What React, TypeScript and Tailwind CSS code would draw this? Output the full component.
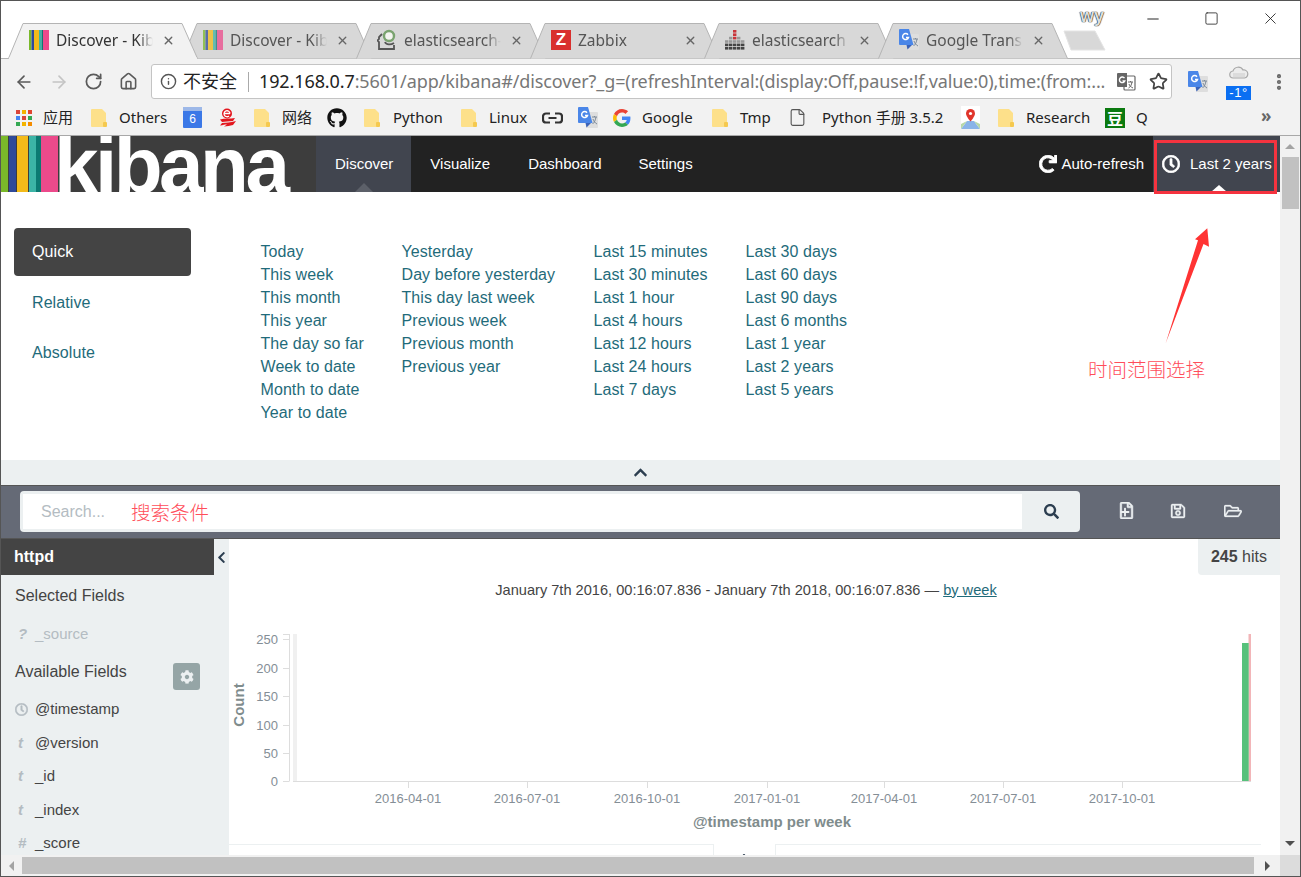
import React from 'react';
import { ArrowLeft, ArrowRight, RotateCw, Home, Info, Star, X, Minus, Square, MoreVertical, File } from 'lucide-react';
import { FaCog, FaChevronLeft, FaChevronUp, FaRedo, FaRegClock, FaRegFolderOpen, FaRegSave, FaRegFile, FaSearch, FaGithub, FaPlus } from 'react-icons/fa';

const SANS = "font-['Liberation_Sans',Arial,sans-serif]";
const CHROME = "font-['Noto_Sans','Noto_Sans_CJK_SC',sans-serif]";

const KibanaIcon = ({ faded = false }: { faded?: boolean }) => (
  <svg width="20" height="20" viewBox="0 0 20 20" className={`shrink-0 ${faded ? 'opacity-75' : ''}`}>
    <rect x="0" width="2.5" height="20" fill="#7ab92a" />
    <rect x="2.5" width="2.5" height="20" fill="#2f4a9a" />
    <rect x="5" width="5" height="20" fill="#f3bb1a" />
    <rect x="10" width="2.5" height="20" fill="#3cb4a6" />
    <rect x="12.5" width="1.5" height="20" fill="#0c7a72" />
    <rect x="14" width="6" height="20" fill="#ec4a8b" />
  </svg>
);

const HeadIcon = () => (
  <svg width="20" height="22" viewBox="0 0 20 22" className="shrink-0">
    <circle cx="12" cy="7" r="5" fill="#f4f4f0" stroke="#7aa36f" strokeWidth="2.4" />
    <path d="M5 5 L2 8 V10 L0.500 11.500 L2 13 V20 H17 V16 M8 13 C9 16 14 16 17 14" fill="none" stroke="#555" strokeWidth="1.800" />
  </svg>
);

const ZabbixIcon = () => (
  <div className={`w-5 h-5 bg-[#d9302e] text-white text-[17px] font-bold flex items-center justify-center shrink-0 ${SANS}`}>Z</div>
);

const BarsIcon = () => (
  <svg width="20" height="20" viewBox="0 0 20 20" className="shrink-0">
    {[0, 1, 2, 3, 4].map((c) =>
      [0, 1, 2, 3, 4, 5].map((r) => {
        if (r < [3, 2, 0, 2, 3][c]) return null;
        const fill = r < 3 && c === 2 ? '#c9343a' : r > 3 ? '#444' : '#999';
        return <rect key={`${c}-${r}`} x={c * 4} y={r * 3.4} width="3.4" height="2.6" fill={fill} />;
      }),
    )}
  </svg>
);

const TranslateIcon = () => (
  <svg width="20" height="22" viewBox="0 0 20 22" className="shrink-0">
    <rect x="8" y="5" width="12" height="16" rx="1" fill="#dedede" />
    <path d="M0 1 a1 1 0 0 1 1 -1 H10 L14.500 16 H1 a1 1 0 0 1 -1 -1 Z" fill="#4a86e8" />
    <path d="M7.500 16 L8.500 20.500 L13 16 Z" fill="#3a62b8" />
    <path d="M9 5.700 A3 3 0 1 0 9.500 8.500 H7" fill="none" stroke="#fff" strokeWidth="1.500" />
    <path d="M14 10 H19 M16.500 9 V10 M14.500 17 C16.500 15.500 17.500 13 18 10 M15 12 C15.500 14 17 16 19 17" fill="none" stroke="#7d8a99" strokeWidth="1" />
  </svg>
);

const FolderIcon = () => (
  <svg width="16" height="18" viewBox="0 0 16 18" className="shrink-0">
    <path d="M0 1 a1 1 0 0 1 1 -1 H11 L15 4 V17 a1 1 0 0 1 -1 1 H1 a1 1 0 0 1 -1 -1 Z" fill="#fde08a" />
    <rect x="12" y="13" width="4" height="5" rx="1" fill="#f5c94f" />
  </svg>
);

const GridIcon = () => (
  <svg width="16" height="16" viewBox="0 0 16 16" className="shrink-0">
    {['#d9453a', '#f4b400', '#e0452f', '#4285f4', '#d9453a', '#34a853', '#34a853', '#f4b400', '#f48c00'].map((c, i) => (
      <rect key={i} x={(i % 3) * 6} y={Math.floor(i / 3) * 6} width="4" height="4" fill={c} />
    ))}
  </svg>
);

const GoogleIcon = () => (
  <svg width="18" height="18" viewBox="0 0 48 48" className="shrink-0">
    <path fill="#EA4335" d="M24 9.5c3.5 0 6.700 1.200 9.200 3.600l6.900-6.900C35.900 2.400 30.500 0 24 0 14.600 0 6.500 5.400 2.600 13.300l8 6.200C12.500 13.700 17.800 9.500 24 9.500z" />
    <path fill="#4285F4" d="M46.500 24.500c0-1.600-.1-3.100-.4-4.500H24v9h12.700c-.6 2.900-2.200 5.400-4.700 7.100l7.700 6c4.500-4.200 6.800-10.300 6.800-17.600z" />
    <path fill="#FBBC05" d="M10.500 28.700c-.5-1.400-.8-3-.8-4.700s.3-3.200.8-4.700l-8-6.200C.9 16.400 0 20.100 0 24s.9 7.600 2.600 10.900l7.900-6.200z" />
    <path fill="#34A853" d="M24 48c6.500 0 11.900-2.100 15.900-5.800l-7.700-6c-2.200 1.400-4.900 2.300-8.100 2.300-6.200 0-11.500-4.200-13.400-9.800l-8 6.200C6.500 42.600 14.600 48 24 48z" />
  </svg>
);

const CalendarIcon = () => (
  <div className="w-[19px] h-[21px] shrink-0 bg-[#3b78e7] flex flex-col rounded-[1px]">
    <div className="h-[4px] bg-[#9db8e8]" />
    <div className={`flex-1 text-white text-[12px] leading-[17px] text-center ${SANS}`}>6</div>
  </div>
);

const NeteaseIcon = () => (
  <svg width="18" height="20" viewBox="0 0 18 20" className="shrink-0">
    <circle cx="8" cy="5.500" r="5" fill="#e3161e" />
    <path d="M5 5.500 H11 M11 5.500 A3 3 0 1 0 10 8" fill="none" stroke="#fff" strokeWidth="1.300" />
    <path d="M1 11.500 C6 10 11 11 16 10 L14 13 C10 13.500 6 13.500 3 14 Z M3 15 C7 14.500 11 14.500 17 13 L14 17 C11 18 8 18 5 18.500 L8 16.500 C6 16.500 4 17 1 17.500 Z" fill="#e3161e" />
  </svg>
);

const LinkIcon = () => (
  <svg width="21" height="12" viewBox="0 0 21 12" className="shrink-0">
    <path d="M8 1.500 H4 a3 3 0 0 0 -3 3 V7.500 a3 3 0 0 0 3 3 H8 M13 1.500 H17 a3 3 0 0 1 3 3 V7.500 a3 3 0 0 1 -3 3 H13 M6.500 6 H14.500" fill="none" stroke="#333" strokeWidth="2.200" />
  </svg>
);

const MapIcon = () => (
  <svg width="19" height="23" viewBox="0 0 19 23" className="shrink-0">
    <rect width="19" height="23" fill="#fff" />
    <path d="M0 23 L6 15 H13 L19 23 Z" fill="#8ab4e8" />
    <path d="M0 23 V18 L6 15 Z M19 23 V18 L13 15 Z" fill="#b7d8a8" />
    <path d="M9.500 3 a4.500 4.500 0 0 1 4.500 4.500 c0 3 -4.500 8 -4.500 8 s-4.500 -5 -4.500 -8 a4.500 4.500 0 0 1 4.500 -4.500 Z" fill="#e0352b" />
    <circle cx="9.500" cy="7.500" r="1.600" fill="#fff" />
  </svg>
);

const DoubanIcon = () => (
  <div className="w-5 h-5 bg-[#0b7a10] shrink-0 flex items-center justify-center text-white text-[16px] font-bold leading-none font-['Noto_Sans_CJK_SC',sans-serif]">豆</div>
);

const tabs = [
  { icon: <KibanaIcon />, title: 'Discover - Kibana', active: true },
  { icon: <KibanaIcon faded />, title: 'Discover - Kibana' },
  { icon: <HeadIcon />, title: 'elasticsearch-head' },
  { icon: <ZabbixIcon />, title: 'Zabbix' },
  { icon: <BarsIcon />, title: 'elasticsearch' },
  { icon: <TranslateIcon />, title: 'Google Translate' },
];

const TabStrip = () => (
  <div className={`h-[58px] bg-white border-b border-[#b4b4b4] flex items-end pl-[7px] relative shrink-0 ${CHROME}`}>
    {tabs.map((t, i) => (
      <div key={i} className={`relative w-[190px] h-[35px] shrink-0 flex items-center pl-[21px] pr-[20px] -mr-[16px] ${t.active ? 'z-10' : ''}`}>
        <svg width="190" height="36" viewBox="0 0 190 36" className="absolute left-0 top-0">
          <path d="M0.500 35.500 L15 0.500 H174 L189.500 35.500" fill={t.active ? '#f2f2f2' : '#d8d8d8'} stroke="#b4b4b4" />
          {t.active && <path d="M1 35.500 H189" stroke="#f2f2f2" strokeWidth="2" />}
        </svg>
        <div className="relative flex items-center w-full -mt-[1px]">
          {t.icon}
          <span className={`ml-[7px] w-[97px] overflow-hidden whitespace-nowrap text-[15.500px] leading-[22px] [mask-image:linear-gradient(to_right,black_85%,transparent)] ${t.active ? 'text-[#333]' : 'text-[#555]'}`}>
            {t.title}
          </span>
          <X size={13} strokeWidth={2.500} className="ml-[9px] text-[#666] shrink-0" />
        </div>
      </div>
    ))}
    <svg width="44" height="22" viewBox="0 0 44 22" className="ml-[11px] mb-[6px] shrink-0">
      <path d="M1 1 H32 L42 20 H8 Z" fill="#d8d8d8" stroke="#e4e4e4" strokeLinejoin="round" />
    </svg>
    <div className={`absolute left-[1079px] top-[2px] text-[18px] font-bold text-[#ddd] [text-shadow:0_0_1px_#000,0_0_1px_#000] ${SANS}`}>wy</div>
    <div className="absolute right-[20px] top-[8px] flex items-center text-[#222]">
      <Minus size={18} strokeWidth={1.300} />
      <Square size={15} strokeWidth={1.300} className="ml-[42px]" />
      <X size={19} strokeWidth={1.100} className="ml-[42px]" />
    </div>
  </div>
);

const ToolBar = () => (
  <div className={`h-[46px] bg-[#f2f2f2] flex items-center pl-[13px] pb-[1px] shrink-0 ${CHROME}`}>
    <ArrowLeft size={20} strokeWidth={2} className="text-[#5a5a5a]" />
    <ArrowRight size={20} strokeWidth={2} className="ml-[15px] text-[#c4c4c4]" />
    <RotateCw size={19} strokeWidth={2.200} className="ml-[15px] text-[#5a5a5a]" />
    <Home size={19} strokeWidth={2} className="ml-[16px] text-[#5a5a5a]" />
    <div className="ml-[13px] w-[1021px] h-[35px] bg-white border border-[#c4c4c4] rounded-[3px] flex items-center pl-[8px]">
      <Info size={17} strokeWidth={2} className="text-[#555] shrink-0" />
      <span className="ml-[6px] text-[18px] text-[#222] whitespace-nowrap">不安全</span>
      <div className="ml-[11px] w-px h-[20px] bg-[#aaa] shrink-0" />
      <div className="ml-[10px] w-[857px] shrink-0 text-[18px] tracking-[-0.110px] whitespace-nowrap overflow-hidden text-[#777]">
        <span className="text-[#222]">192.168.0.7</span>:5601/app/kibana#/discover?_g=(refreshInterval:(display:Off,pause:!f,value:0),time:(from:...
      </div>
      <svg width="20" height="20" viewBox="0 0 20 20" className="shrink-0">
        <rect x="8" y="4" width="11" height="14" rx="1" fill="#fff" stroke="#666" strokeWidth="1.200" />
        <path d="M1 2 a1 1 0 0 1 1 -1 H11 V15 H2 a1 1 0 0 1 -1 -1 Z" fill="#666" />
        <path d="M8.500 6.200 A2.800 2.800 0 1 0 8.800 9 H6.500" fill="none" stroke="#fff" strokeWidth="1.400" />
        <path d="M12 10 H17 M14.500 9 V10 M12.500 16 C14.500 15 15.500 13 16 10 M13 12 C13.500 14 15 15 17 16" fill="none" stroke="#666" strokeWidth="1" />
      </svg>
      <Star size={19} strokeWidth={2.200} className="ml-[13px] text-[#444] shrink-0" />
    </div>
    <div className="ml-[16px]"><TranslateIcon /></div>
    <div className="ml-[18px] w-[25px] h-[34px] relative shrink-0 flex flex-col items-center">
      <svg width="20" height="14" viewBox="0 0 20 14">
        <path d="M4.500 13 a3.500 3.500 0 0 1 -0.500 -7 a5.500 5.500 0 0 1 10 -1 a4 4 0 0 1 1.500 8 Z" fill="#ececec" stroke="#a8a8a8" strokeWidth="1.200" />
        <path d="M4 9 H16 M4 11 H16" stroke="#c4c4c4" strokeWidth="0.800" />
      </svg>
      <div className={`absolute bottom-[-1px] w-[25px] h-[14px] bg-[#0b6ff2] text-white text-[13px] leading-[14px] text-center tracking-[0.500px] ${SANS}`}>-1°</div>
    </div>
    <MoreVertical size={20} strokeWidth={3} className="ml-[18px] text-[#666]" />
  </div>
);

const bookmarks: { w: string; icon: React.ReactNode; label?: string; gap: string }[] = [
  { w: 'w-[75px]', icon: <GridIcon />, label: '应用', gap: 'ml-[11px]' },
  { w: 'w-[92px]', icon: <FolderIcon />, label: 'Others', gap: 'ml-[12px]' },
  { w: 'w-[36px]', icon: <CalendarIcon />, gap: '' },
  { w: 'w-[35px]', icon: <NeteaseIcon />, gap: '' },
  { w: 'w-[73px]', icon: <FolderIcon />, label: '网络', gap: 'ml-[12px]' },
  { w: 'w-[37px]', icon: <FaGithub size={20} className="text-[#111]" />, gap: '' },
  { w: 'w-[97px]', icon: <FolderIcon />, label: 'Python', gap: 'ml-[13px]' },
  { w: 'w-[81px]', icon: <FolderIcon />, label: 'Linux', gap: 'ml-[12px]' },
  { w: 'w-[36px]', icon: <LinkIcon />, gap: '' },
  { w: 'w-[35px]', icon: <TranslateIcon />, gap: '' },
  { w: 'w-[99px]', icon: <GoogleIcon />, label: 'Google', gap: 'ml-[11px]' },
  { w: 'w-[78px]', icon: <FolderIcon />, label: 'Tmp', gap: 'ml-[12px]' },
  { w: 'w-[171px]', icon: <File size={19} strokeWidth={1.400} className="text-[#555] -ml-[2px]" />, label: 'Python 手册 3.5.2', gap: 'ml-[15px]' },
  { w: 'w-[37px]', icon: <MapIcon />, gap: '' },
  { w: 'w-[107px]', icon: <FolderIcon />, label: 'Research', gap: 'ml-[12px]' },
  { w: 'w-[100px]', icon: <DoubanIcon />, label: 'Q', gap: 'ml-[11px]' },
];

const BookmarksBar = () => (
  <div className={`h-[31px] bg-[#f2f2f2] border-b border-[#a8a8a8] flex items-center pl-[15px] pb-[5px] shrink-0 relative text-[15px] text-[#222] ${CHROME}`}>
    {bookmarks.map((b, i) => (
      <div key={i} className={`${b.w} shrink-0 flex items-center whitespace-nowrap`}>
        {b.icon}
        {b.label && <span className={b.gap}>{b.label}</span>}
      </div>
    ))}
    <span className="absolute left-[1260px] -top-[2px] text-[17px] font-bold text-[#666]">»</span>
  </div>
);

const NavBar = () => (
  <div className={`h-[56px] bg-[#222] flex items-stretch text-white text-[15px] shrink-0 ${SANS}`}>
    <div className="w-[315px] bg-[#3d3d3d] flex overflow-hidden shrink-0">
      <div className="w-[7px] bg-[#7ab92a]" />
      <div className="w-[1px] bg-[#3d3d3d]" />
      <div className="w-[7px] bg-[#2f4a9a]" />
      <div className="w-[1px] bg-[#3d3d3d]" />
      <div className="w-[11px] bg-[#f3bb1a]" />
      <div className="w-[1px] bg-[#3d3d3d]" />
      <div className="w-[7px] bg-[#3cb4a6]" />
      <div className="w-[5px] bg-[#0c7a72]" />
      <div className="w-[17px] bg-[#ec4a8b]" />
      <div className="text-[80px] font-bold leading-[56px] tracking-[-3.500px] text-white whitespace-nowrap -ml-[4px] translate-y-[2px]">kibana</div>
    </div>
    <div className="relative pl-[19px] pr-[18px] bg-[#41454f] flex items-center">
      Discover
      <div className="absolute bottom-0 left-1/2 -translate-x-1/2 border-x-[9px] border-x-transparent border-b-[9px] border-b-[#5c6069]" />
    </div>
    <div className="px-[19px] flex items-center">Visualize</div>
    <div className="pl-[19px] pr-[18px] flex items-center">Dashboard</div>
    <div className="px-[19px] flex items-center">Settings</div>
    <div className="flex-1" />
    <div className="flex items-center gap-[4px] pr-[9px]">
      <FaRedo size={18} stroke="currentColor" strokeWidth={24} />
      Auto-refresh
    </div>
    <div className="relative w-[127px] bg-[#41454f] flex items-center pl-[9px]">
      <FaRegClock size={18} stroke="currentColor" strokeWidth={24} />
      <span className="ml-[10px]">Last 2 years</span>
      <div className="absolute bottom-0 left-[58px] border-x-[8px] border-x-transparent border-b-[7px] border-b-white" />
    </div>
  </div>
);

const quickColumns = [
  { w: 'w-[141px]', items: ['Today', 'This week', 'This month', 'This year', 'The day so far', 'Week to date', 'Month to date', 'Year to date'] },
  { w: 'w-[192px]', items: ['Yesterday', 'Day before yesterday', 'This day last week', 'Previous week', 'Previous month', 'Previous year'] },
  { w: 'w-[152px]', items: ['Last 15 minutes', 'Last 30 minutes', 'Last 1 hour', 'Last 4 hours', 'Last 12 hours', 'Last 24 hours', 'Last 7 days'] },
  { w: 'w-[152px]', items: ['Last 30 days', 'Last 60 days', 'Last 90 days', 'Last 6 months', 'Last 1 year', 'Last 2 years', 'Last 5 years'] },
];

const TimePanel = () => (
  <div className={`h-[268px] bg-white flex pl-[13px] pt-[36px] text-[16px] tracking-[0.080px] text-[#1f6b7a] shrink-0 ${SANS}`}>
    <div className="w-[177px] shrink-0">
      <div className="h-[48px] bg-[#444] text-white rounded-[4px] flex items-center pl-[18px]">Quick</div>
      <div className="h-[50px] mt-[2px] flex items-center pl-[18px]">Relative</div>
      <div className="h-[50px] flex items-center pl-[18px]">Absolute</div>
    </div>
    <div className="ml-[70px] -translate-x-[0.5px] flex pt-[12px]">
      {quickColumns.map((c, i) => (
        <div key={i} className={c.w}>
          {c.items.map((item) => (
            <div key={item} className="h-[23px] leading-[23px] whitespace-nowrap">{item}</div>
          ))}
        </div>
      ))}
    </div>
  </div>
);

const SearchBar = () => (
  <div className={`h-[54px] bg-[#656a76] border-t border-[#555] border-b flex items-center pl-[19px] shrink-0 ${SANS}`}>
    <div className="w-[1060px] h-[41px] flex rounded-[4px] overflow-hidden bg-[#ecf0f1] -mt-[1px]">
      <div className="w-[999px] my-[3px] ml-[3px] bg-white flex items-center pl-[18px] text-[16px] text-[#b4bcc2]">
        Search...
        <span className="ml-[26px] text-[19.500px] text-[#ff4d5a] font-['Noto_Sans_CJK_SC',sans-serif] font-light">搜索条件</span>
      </div>
      <div className="flex-1 flex items-center justify-center">
        <FaSearch size={15} className="text-[#2c3e50]" />
      </div>
    </div>
    <div className="relative ml-[38px] -mt-[3px] text-[#ecf0f1]">
      <FaRegFile size={17} stroke="currentColor" strokeWidth={16} />
      <FaPlus size={10} className="absolute left-[2px] top-[5px]" />
    </div>
    <FaRegSave size={16} stroke="currentColor" strokeWidth={12} className="ml-[35px] -mt-[3px] text-[#ecf0f1]" />
    <FaRegFolderOpen size={18} stroke="currentColor" strokeWidth={8} className="ml-[38px] -mt-[3px] text-[#ecf0f1]" />
  </div>
);

const fields = [
  { type: 'clock', name: '@timestamp', h: 'h-[34px]' },
  { type: 't', name: '@version', h: 'h-[34px]' },
  { type: 't', name: '_id', h: 'h-[33px]' },
  { type: 't', name: '_index', h: 'h-[34px]' },
  { type: '#', name: '_score', h: 'h-[33px]' },
];

const Sidebar = () => (
  <div className="w-[228px] bg-[#ecf0f1] shrink-0 flex flex-col overflow-hidden">
    <div className="flex h-[36px] shrink-0">
      <div className="w-[213px] bg-[#444] text-white font-bold text-[16px] flex items-center pl-[13px]">httpd</div>
      <div className="flex-1 bg-[#ecf0f1] flex items-center justify-center">
        <FaChevronLeft size={13} className="text-[#2c3e50]" />
      </div>
    </div>
    <div className="pl-[14px] mt-[11px] h-[20px] leading-[20px] text-[16px] text-[#444] shrink-0">Selected Fields</div>
    <div className="pl-[17px] mt-[18px] h-[20px] flex items-center text-[15px] text-[#b4bcc2] shrink-0">
      <span className="w-[17px] font-bold italic">?</span>
      <span>_source</span>
    </div>
    <div className="pl-[14px] pr-[28px] mt-[13px] h-[34px] flex items-start justify-between text-[16px] text-[#444] shrink-0">
      <span className="mt-[3px]">Available Fields</span>
      <div className="w-[27px] h-[27px] -ml-[1px] mr-[1px] mt-[6px] bg-[#95a5a6] rounded-[3px] flex items-center justify-center">
        <FaCog size={14} className="text-[#ecf0f1]" />
      </div>
    </div>
    <div className="mt-[1px]">
      {fields.map((f) => (
        <div key={f.name} className={`${f.h} pl-[14px] flex items-center text-[15px] text-[#444]`}>
          <span className="w-[20px] text-[#b4bcc2] font-bold italic flex">
            {f.type === 'clock' ? <FaRegClock size={13} stroke="currentColor" strokeWidth={20} /> : <span className="pl-[3px]">{f.type}</span>}
          </span>
          <span>{f.name}</span>
        </div>
      ))}
    </div>
  </div>
);

const yTicks = [
  { y: 639, label: '250' },
  { y: 668, label: '200' },
  { y: 696, label: '150' },
  { y: 725, label: '100' },
  { y: 753, label: '50' },
  { y: 781, label: '0' },
];
const xTicks = [
  { x: 408, label: '2016-04-01' },
  { x: 527, label: '2016-07-01' },
  { x: 647, label: '2016-10-01' },
  { x: 767, label: '2017-01-01' },
  { x: 884, label: '2017-04-01' },
  { x: 1003, label: '2017-07-01' },
  { x: 1122, label: '2017-10-01' },
];

// chart coordinates are page coordinates, viewBox starts at the panel's corner
const Chart = () => (
  <svg width="1051" height="224" viewBox="229 620 1051 224" className="block shrink-0">
    <g fontFamily="'Liberation Sans', Arial, sans-serif">
      <rect x="293" y="634" width="4" height="147" fill="#f0f0f0" />
      <path d="M289.500 634 V781.500 M283 634.500 H289" stroke="#ddd" fill="none" />
      {yTicks.map((t) => (
        <g key={t.label}>
          <path d={`M283 ${t.y + 0.5} H289`} stroke="#ddd" />
          <text x="278" y={t.y + 5} textAnchor="end" fontSize="13" fill="#848e96">{t.label}</text>
        </g>
      ))}
      <path d="M293 781.500 H1251" stroke="#ddd" />
      {xTicks.map((t) => (
        <g key={t.label}>
          <path d={`M${t.x + 0.5} 782 V788`} stroke="#ddd" />
          <text x={t.x} y="803" textAnchor="middle" fontSize="13" fill="#848e96">{t.label}</text>
        </g>
      ))}
      <rect x="1248.500" y="634" width="2.500" height="147" fill="#f2b5b8" />
      <rect x="1242" y="643" width="6.700" height="138" fill="#57c17b" />
      <text transform="translate(243.500 705) rotate(-90)" textAnchor="middle" fontSize="15" fontWeight="700" fill="#7f8c8d">Count</text>
      <text x="772" y="827" textAnchor="middle" fontSize="15" fontWeight="700" fill="#7f8c8d">@timestamp per week</text>
    </g>
  </svg>
);

const Main = () => (
  <div className="flex-1 bg-white flex flex-col overflow-hidden">
    <div className="flex justify-end h-[36px] shrink-0">
      <div className="w-[82px] bg-[#ecf0f1] rounded-bl-[4px] flex items-center justify-center text-[16px] text-[#444] whitespace-nowrap">
        <b>245</b>&nbsp;hits
      </div>
    </div>
    <div className="h-[31px] shrink-0 flex items-center justify-center text-[14.600px] text-[#444] pr-[17px]">
      <span>January 7th 2016, 00:16:07.836 - January 7th 2018, 00:16:07.836 — <span className="underline text-[#1f6b7a]">by week</span></span>
    </div>
    <div className="h-[14px] shrink-0" />
    <Chart />
    <div className="flex-1 flex min-h-0 overflow-hidden">
      <div className="w-[485px] border-t border-r border-[#ecf0f1]" />
      <div className="w-[61px] flex justify-center pt-[7px] pr-[1px]"><FaChevronUp size={12} className="text-[#2c3e50]" /></div>
      <div className="w-[486px] border-t border-l border-[#ecf0f1]" />
    </div>
  </div>
);

const VScroll = () => (
  <div className="w-[20px] bg-[#f1f1f1] shrink-0 flex flex-col items-center">
    <div className="h-[21px] flex items-center justify-center">
      <div className="border-x-[5px] border-x-transparent border-b-[5px] border-b-[#a3a3a3]" />
    </div>
    <div className="w-[17px] h-[52px] bg-[#c1c1c1]" />
    <div className="flex-1" />
    <div className="h-[23px] pb-[1px] flex items-center justify-center">
      <div className="border-x-[5px] border-x-transparent border-t-[5px] border-t-[#505050]" />
    </div>
  </div>
);

const HScroll = () => (
  <div className="h-[21px] bg-[#f1f1f1] flex items-center shrink-0">
    <div className="w-[21px] flex justify-center">
      <div className="border-y-[5px] border-y-transparent border-r-[5px] border-r-[#a3a3a3]" />
    </div>
    <div className="w-[1232px] h-[17px] bg-[#c1c1c1]" />
    <div className="w-[26px] flex justify-center">
      <div className="border-y-[5px] border-y-transparent border-l-[5px] border-l-[#505050]" />
    </div>
    <div className="w-[20px] h-full bg-[#dcdcdc]" />
  </div>
);

export default function App() {
  return (
    <div className="w-[1301px] h-[877px] bg-white border border-[#555] flex flex-col overflow-hidden relative">
      <TabStrip />
      <ToolBar />
      <BookmarksBar />
      <div className="flex-1 flex min-h-0">
        <div className={`w-[1279px] flex flex-col ${SANS}`}>
          <NavBar />
          <TimePanel />
          <div className="h-[25px] bg-[#ecf0f1] flex items-center justify-center shrink-0">
            <FaChevronUp size={15} className="text-[#2c3e50]" />
          </div>
          <SearchBar />
          <div className="flex-1 flex min-h-0">
            <Sidebar />
            <Main />
          </div>
        </div>
        <VScroll />
      </div>
      <HScroll />

      {/* red annotations drawn over the screenshot */}
      <div className="absolute left-[1153px] top-[139px] w-[123px] h-[54px] border-[3px] border-[#f5333f]" />
      <svg width="60" height="125" viewBox="1160 225 60 125" className="absolute left-[1159px] top-[224px]">
        <path d="M1207.300 228.300 L1209 246.700 L1203.500 244 L1165.700 343.300 L1198 240.200 L1195 239.300 Z" fill="#ff3333" />
      </svg>
      <div className="absolute left-[1087px] top-[355px] text-[19.500px] leading-[26px] text-[#ff4d5a] font-['Noto_Sans_CJK_SC',sans-serif] font-light">时间范围选择</div>
    </div>
  );
}
